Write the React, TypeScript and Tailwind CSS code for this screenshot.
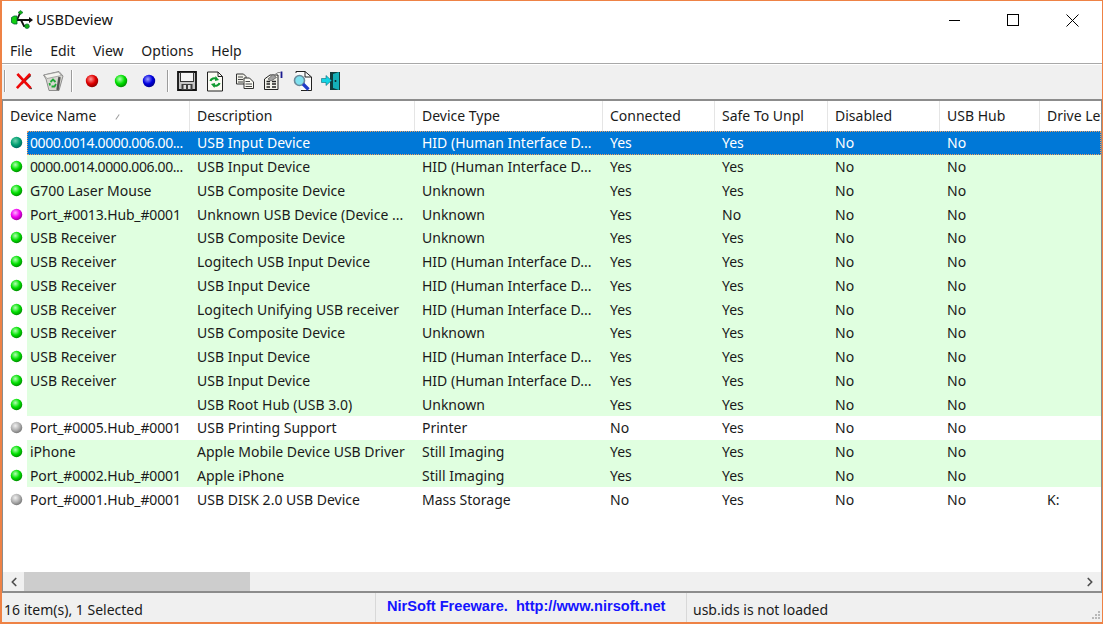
import { ChevronLeft, ChevronRight } from "lucide-react"

type Row = {
  name: string
  desc: string
  type: string
  conn: string
  safe: string
  color: "green" | "magenta" | "gray"
  drive?: string
  tight?: string
}

const rows: Row[] = [
  { name: "0000.0014.0000.006.00...", desc: "USB Input Device", type: "HID (Human Interface D...", conn: "Yes", safe: "Yes", color: "green", tight: "tracking-[-0.4px]" },
  { name: "0000.0014.0000.006.00...", desc: "USB Input Device", type: "HID (Human Interface D...", conn: "Yes", safe: "Yes", color: "green", tight: "tracking-[-0.4px]" },
  { name: "G700 Laser Mouse", desc: "USB Composite Device", type: "Unknown", conn: "Yes", safe: "Yes", color: "green" },
  { name: "Port_#0013.Hub_#0001", desc: "Unknown USB Device (Device ...", type: "Unknown", conn: "Yes", safe: "No", color: "magenta", tight: "tracking-[-0.15px]" },
  { name: "USB Receiver", desc: "USB Composite Device", type: "Unknown", conn: "Yes", safe: "Yes", color: "green" },
  { name: "USB Receiver", desc: "Logitech USB Input Device", type: "HID (Human Interface D...", conn: "Yes", safe: "Yes", color: "green" },
  { name: "USB Receiver", desc: "USB Input Device", type: "HID (Human Interface D...", conn: "Yes", safe: "Yes", color: "green" },
  { name: "USB Receiver", desc: "Logitech Unifying USB receiver", type: "HID (Human Interface D...", conn: "Yes", safe: "Yes", color: "green" },
  { name: "USB Receiver", desc: "USB Composite Device", type: "Unknown", conn: "Yes", safe: "Yes", color: "green" },
  { name: "USB Receiver", desc: "USB Input Device", type: "HID (Human Interface D...", conn: "Yes", safe: "Yes", color: "green" },
  { name: "USB Receiver", desc: "USB Input Device", type: "HID (Human Interface D...", conn: "Yes", safe: "Yes", color: "green" },
  { name: "", desc: "USB Root Hub (USB 3.0)", type: "Unknown", conn: "Yes", safe: "Yes", color: "green" },
  { name: "Port_#0005.Hub_#0001", desc: "USB Printing Support", type: "Printer", conn: "No", safe: "Yes", color: "gray", tight: "tracking-[-0.15px]" },
  { name: "iPhone", desc: "Apple Mobile Device USB Driver", type: "Still Imaging", conn: "Yes", safe: "Yes", color: "green" },
  { name: "Port_#0002.Hub_#0001", desc: "Apple iPhone", type: "Still Imaging", conn: "Yes", safe: "Yes", color: "green", tight: "tracking-[-0.15px]" },
  { name: "Port_#0001.Hub_#0001", desc: "USB DISK 2.0 USB Device", type: "Mass Storage", conn: "No", safe: "Yes", color: "gray", drive: "K:", tight: "tracking-[-0.15px]" },
]

const ballColors = {
  red: ["#ff9a9a", "#e00000", "#800000"],
  green: ["#b4ffb4", "#00e000", "#008000"],
  blue: ["#a0a0ff", "#0000e0", "#000080"],
  magenta: ["#ffb0ff", "#f000f0", "#900090"],
  gray: ["#f0f0f0", "#b0b0b0", "#707070"],
  teal: ["#70d0b0", "#00a070", "#006060"],
}

function Ball({ color, size = 14 }: { color: keyof typeof ballColors; size?: number }) {
  const [a, b, c] = ballColors[color]
  const id = `ball-${color}`
  return (
    <svg width={size} height={size} viewBox="0 0 14 14" className="shrink-0">
      <defs>
        <radialGradient id={id} cx="0.4" cy="0.35" r="0.7">
          <stop offset="0" stopColor={a} />
          <stop offset="0.55" stopColor={b} />
          <stop offset="1" stopColor={c} />
        </radialGradient>
      </defs>
      <circle cx="7" cy="7" r="6.2" fill={`url(#${id})`} />
    </svg>
  )
}

function UsbLogo() {
  return (
    <svg width="22" height="20" viewBox="0 0 22 20">
      <path d="M3 10H19M6 10L9 3M10 10L13 16H15" fill="none" stroke="#111" strokeWidth="1.8" />
      <path d="M18 7L22 10L18 13Z" fill="#111" />
      <path d="M0.5 7.5L3 6H6V14H3L0.5 12.5Z" fill="#12d012" stroke="#063" strokeWidth="0.8" />
      <path d="M9.5 0.5L12 2.5L9.5 4.5L7 2.5Z" fill="#12b012" stroke="#063" strokeWidth="0.6" />
      <circle cx="16" cy="16.2" r="2.3" fill="#12b012" stroke="#063" strokeWidth="0.7" />
    </svg>
  )
}

function DeleteIcon() {
  return (
    <svg width="19" height="19" viewBox="0 0 19 19">
      <path d="M3 2.5L17.5 17.5M16.5 3L7 12" stroke="#333" strokeWidth="1.6" fill="none" />
      <path d="M2.5 1.5L16.5 16.5M16 1.5L2 16.5" stroke="#f00808" strokeWidth="2.8" />
    </svg>
  )
}

function BinIcon() {
  return (
    <svg width="22" height="22" viewBox="0 0 22 22">
      <path d="M1.5 5L17 1.5L21 6L17 20.5H7L4 9Z" fill="#d8d8d2" stroke="#777" strokeWidth="0.8" />
      <path d="M2 5L16.5 2L19.5 5.5L5 8.5Z" fill="#f4f4f0" stroke="#8c8c8c" strokeWidth="0.7" />
      <path d="M17.5 7L15.5 20" stroke="#555" strokeWidth="2.4" />
      <path d="M8.5 12L11 9.5L13.5 12M14 14L12.5 16.5H9.5M8 15.5L7.5 13" fill="none" stroke="#20a838" strokeWidth="1.8" />
    </svg>
  )
}

function SaveIcon() {
  return (
    <svg width="20" height="20" viewBox="0 0 20 20">
      <path d="M1 1H19V19H1Z" fill="#c4c4c4" stroke="#111" strokeWidth="1.8" />
      <rect x="3.5" y="1.5" width="13" height="9" fill="#f4f4f4" stroke="#333" />
      <rect x="4.5" y="13" width="11" height="6" fill="#3c3c3c" />
      <rect x="6.5" y="14" width="2.5" height="4" fill="#ddd" />
      <rect x="11" y="14" width="2.5" height="4" fill="#ddd" />
    </svg>
  )
}

function RefreshIcon() {
  return (
    <svg width="18" height="21" viewBox="0 0 18 21">
      <path d="M1.5 1H12L16.5 5.5V20H1.5Z" fill="#fbfbf4" stroke="#222" />
      <path d="M12 1V5.5H16.5" fill="none" stroke="#222" />
      <path d="M4.5 10C5 7.5 8.5 6.5 10.5 8M13.5 12C13 14.5 9.5 15.5 7.5 14" fill="none" stroke="#0f9a30" strokeWidth="2.2" />
      <path d="M9.5 5L13 9L9 10ZM8.5 17L5 13L9 12Z" fill="#0f9a30" />
    </svg>
  )
}

function CopyIcon() {
  return (
    <svg width="20" height="16" viewBox="0 0 20 16">
      <path d="M1.5 1H8.5L11 3.5V11H1.5Z" fill="#f0f0e8" stroke="#333" />
      <path d="M3 4H8M3 6.5H8M3 9H8" stroke="#444" />
      <path d="M9 5H14.5L18.5 9V15.5H9Z" fill="#fbfbf4" stroke="#333" />
      <path d="M10.5 8.5H15M10.5 11H17M10.5 13.5H17" stroke="#444" />
    </svg>
  )
}

function PropsIcon() {
  return (
    <svg width="20" height="20" viewBox="0 0 20 20">
      <path d="M1.5 8L7 4H15V18.5H1.5Z" fill="#f4f4ec" stroke="#222" />
      <path d="M3.5 10.5H7M9 10.5H13M3.5 13H7M9 13H13M3.5 16H7M9 16H13" stroke="#222" strokeWidth="1.4" />
      <path d="M5 8L10 3.5L13.5 6.5L8 10Z" fill="#a0a0a0" stroke="#555" strokeWidth="0.7" />
      <path d="M12 3.5L15 1.5H17.5" fill="none" stroke="#8a8a8a" />
      <path d="M18.5 0.5V7" stroke="#1a1a90" strokeWidth="1.8" />
    </svg>
  )
}

function FindIcon() {
  return (
    <svg width="20" height="22" viewBox="0 0 20 22">
      <path d="M3 3V1.5H12L18.5 7V20.5H8" fill="#fbfbfb" stroke="#222" />
      <path d="M12 1.5V7H18.5" fill="none" stroke="#222" />
      <circle cx="6.5" cy="10.5" r="5" fill="#7fe0ee" stroke="#6a8a9a" strokeWidth="1.6" />
      <path d="M10 14L15.5 19.5" stroke="#1e3cc8" strokeWidth="3.2" />
    </svg>
  )
}

function ExitIcon() {
  return (
    <svg width="20" height="20" viewBox="0 0 20 20">
      <path d="M9 1H19V19H9Z" fill="#103c3c" />
      <path d="M12 3L18 1V19L12 17Z" fill="#14b0b8" />
      <circle cx="14.5" cy="10" r="1" fill="#0b2a2a" />
      <path d="M0.5 7.5H5V4.5L10.5 9.5L5 14.5V11.5H0.5Z" fill="#12d4e4" stroke="#0a6a78" strokeWidth="0.6" />
    </svg>
  )
}

const Separator = () => <div className="box-content h-[22px] w-px border-r border-white bg-[#9c9c9c]" />

const columns = [
  { label: "Device Name", w: "w-[187px]" },
  { label: "Description", w: "w-[225px]" },
  { label: "Device Type", w: "w-[188px]" },
  { label: "Connected", w: "w-[112px]" },
  { label: "Safe To Unpl", w: "w-[113px]" },
  { label: "Disabled", w: "w-[112px]" },
  { label: "USB Hub", w: "w-[100px]" },
  { label: "Drive Letter", w: "w-[100px]" },
]

export default function App() {
  return (
    <div
      className="flex h-[624px] w-[1103px] flex-col overflow-hidden border border-b-2 border-l-2 border-[#ee8245] bg-white text-[14px] text-[#1a1a1a]"
      style={{ fontFamily: '"Noto Sans", "Open Sans", sans-serif' }}
    >
      <div className="flex h-[38px] shrink-0 items-center pl-[9px]">
        <UsbLogo />
        <span className="ml-[3px] pb-[1px] text-[14.5px] text-[#111]">USBDeview</span>
        <div className="ml-auto flex items-center pr-[1px]">
          <div className="flex h-[29px] w-[59px] items-center justify-center">
            <div className="h-px w-[11px] bg-black" />
          </div>
          <div className="flex h-[29px] w-[59px] items-center justify-center pr-[1px]">
            <div className="h-[12px] w-[12px] border border-black" />
          </div>
          <div className="flex h-[29px] w-[58px] items-center justify-center">
            <svg width="13" height="13" viewBox="0 0 13 13">
              <path d="M0.5 0.5L12.5 12.5M12.5 0.5L0.5 12.5" stroke="#000" />
            </svg>
          </div>
        </div>
      </div>

      <div className="flex h-[25px] shrink-0 items-center gap-[17.75px] border-b border-[#a8a8a8] pb-[1px] pl-[8px]">
        {["File", "Edit", "View", "Options", "Help"].map((m) => (
          <span key={m}>{m}</span>
        ))}
      </div>

      <div className="flex h-[35px] shrink-0 items-center border-t border-white bg-[#f0f0f0] pb-[2px] pl-[2px]">
        <Separator />
        <div className="ml-[9px] flex w-[18px] justify-center"><DeleteIcon /></div>
        <div className="ml-[9px] flex w-[22px] justify-center"><BinIcon /></div>
        <div className="ml-[7px]"><Separator /></div>
        <div className="ml-[12px]"><Ball color="red" /></div>
        <div className="ml-[15px]"><Ball color="green" /></div>
        <div className="ml-[14px]"><Ball color="blue" /></div>
        <div className="ml-[11px]"><Separator /></div>
        <div className="ml-[8px]"><SaveIcon /></div>
        <div className="ml-[9px]"><RefreshIcon /></div>
        <div className="ml-[11px]"><CopyIcon /></div>
        <div className="ml-[8px]"><PropsIcon /></div>
        <div className="ml-[10px]"><FindIcon /></div>
        <div className="ml-[8px]"><ExitIcon /></div>
      </div>

      <div className="flex min-h-0 flex-1 flex-col overflow-hidden border-x border-y-2 border-[#8c8c8c] bg-white">
        <div className="flex h-[30px] shrink-0 overflow-hidden">
          {columns.map((c, i) => (
            <div key={c.label} className={`${c.w} relative flex shrink-0 items-center border-r border-[#e5e5e5] pb-[1px] pl-[7px]`}>
              <span className="whitespace-nowrap">{c.label}</span>
              {i === 0 && <span className="absolute left-[114px] top-[13px] h-[6px] w-px rotate-[35deg] bg-[#999]" />}
            </div>
          ))}
        </div>

        <div className="min-h-0 flex-1 overflow-hidden">
          {rows.map((r, i) => {
            const selected = i === 0
            const tint = r.color === "gray" ? "bg-white" : "bg-[#e0ffe0]"
            return (
              <div key={i} className="flex h-[23.75px] items-center">
                <div className="flex w-[24px] shrink-0 items-center justify-center pl-[2px]">
                  <Ball color={selected ? "teal" : r.color} size={13} />
                </div>
                <div
                  className={`flex h-full min-w-0 flex-1 items-center overflow-hidden ${
                    selected ? "bg-[#0078d7] text-white outline-1 -outline-offset-1 outline-dotted outline-[#f0a060]" : tint
                  }`}
                >
                  <div className={`w-[163px] shrink-0 whitespace-nowrap pl-[3px] ${r.tight ?? ""}`}>{r.name}</div>
                  <div className="w-[225px] shrink-0 whitespace-nowrap pl-[7px]">{r.desc}</div>
                  <div className="w-[188px] shrink-0 whitespace-nowrap pl-[7px]">{r.type}</div>
                  <div className="w-[112px] shrink-0 pl-[7px]">{r.conn}</div>
                  <div className="w-[113px] shrink-0 pl-[7px]">{r.safe}</div>
                  <div className="w-[112px] shrink-0 pl-[7px]">No</div>
                  <div className="w-[100px] shrink-0 pl-[7px]">No</div>
                  <div className="shrink-0 pl-[7px]">{r.drive}</div>
                </div>
              </div>
            )
          })}
        </div>

        <div className="flex h-[19px] shrink-0 items-center justify-between bg-[#f0f0f0]">
          <div className="flex h-full w-[21px] items-center justify-center">
            <ChevronLeft size={14} strokeWidth={3} color="#505050" />
          </div>
          <div className="mr-auto h-full w-[226px] bg-[#cdcdcd]" />
          <div className="flex h-full w-[22px] items-center justify-center">
            <ChevronRight size={14} strokeWidth={3} color="#505050" />
          </div>
        </div>
      </div>

      <div className="flex h-[29px] shrink-0 items-center bg-[#f0f0f0] text-[14px]">
        <div className="flex h-full w-[374px] shrink-0 items-center border-r border-[#d8d8d8] pl-[2px] pt-[3px]">
          16 item(s), 1 Selected
        </div>
        <div
          className="flex h-full w-[311px] shrink-0 items-center whitespace-nowrap border-r border-[#d8d8d8] pb-[2px] pl-[11px] text-[14.6px] font-bold text-[#1414ff]"
          style={{ fontFamily: '"Liberation Sans", sans-serif' }}
        >
          NirSoft Freeware.&nbsp; http://www.nirsoft.net
        </div>
        <div className="pl-[6px] pt-[3px]">usb.ids is not loaded</div>
        <div className="relative ml-auto h-full w-[14px]">
          <svg width="12" height="12" viewBox="0 0 12 12" className="absolute bottom-[1px] right-[1px]">
            <path d="M9 2h2v2H9zM6 5h2v2H6zM9 5h2v2H9zM3 8h2v2H3zM6 8h2v2H6zM9 8h2v2H9z" fill="#b8b8b8" />
          </svg>
        </div>
      </div>
    </div>
  )
}
